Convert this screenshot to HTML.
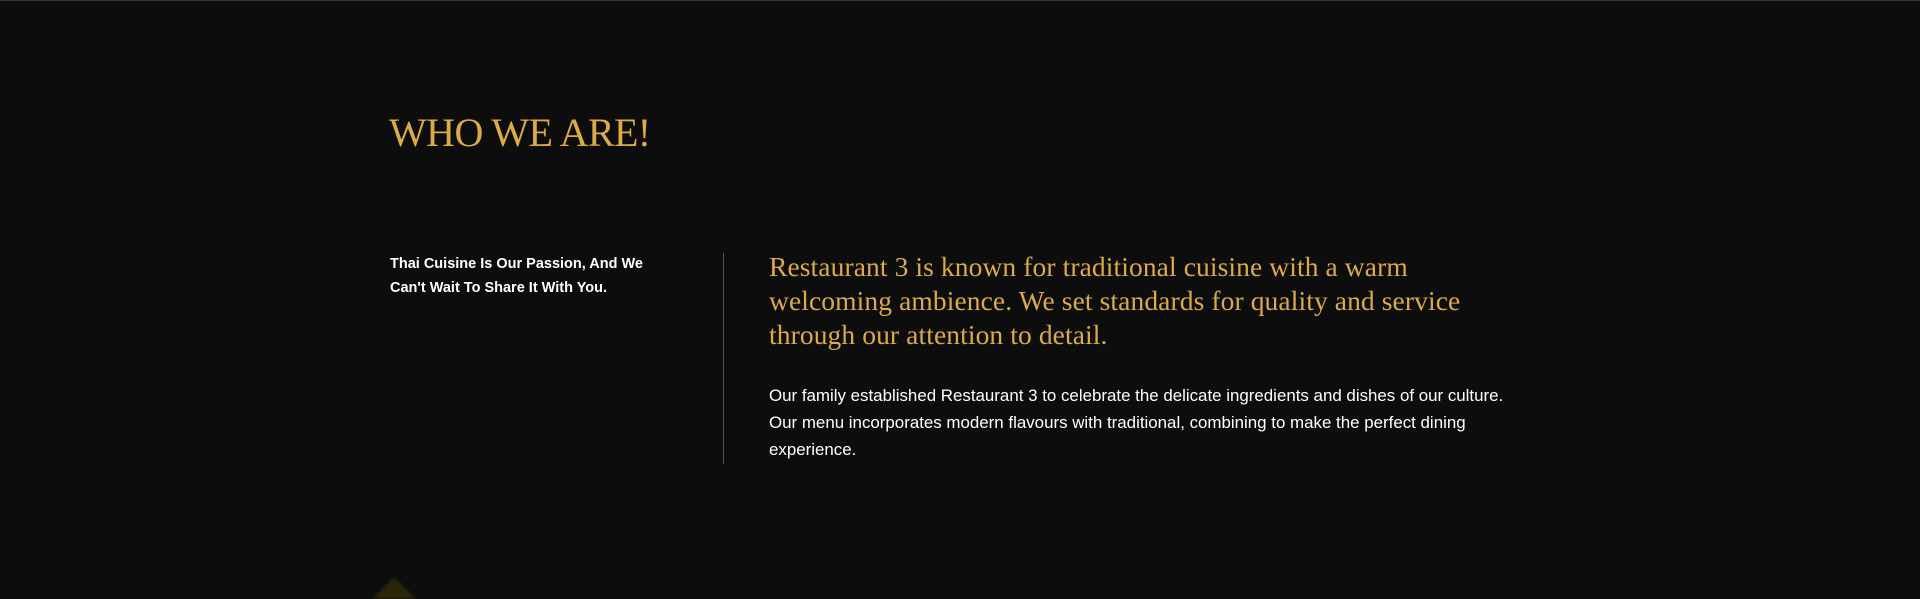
<!DOCTYPE html>
<html><head><meta charset="utf-8"><style>
html,body{margin:0;padding:0;}
body{width:1920px;height:593px;background:#0d0d0d;position:relative;overflow:hidden;border-top:1px solid #3a3a3a;box-sizing:border-box;}
.h{position:absolute;left:389px;top:104px;font-family:"Liberation Serif",serif;font-size:40px;color:#dcab45;letter-spacing:-0.6px;margin:0;font-weight:normal;line-height:56px;}
.sub{position:absolute;left:390px;top:251px;width:290px;font-family:"Liberation Sans",sans-serif;font-weight:bold;font-size:14.5px;line-height:24px;color:#fff;}
.line{position:absolute;left:723px;top:252px;width:1px;height:211px;background:#555;}
.lead{position:absolute;left:769px;top:249px;width:725px;font-family:"Liberation Serif",serif;font-size:27.5px;line-height:34px;letter-spacing:0.1px;color:#dcab45;}
.body{position:absolute;left:769px;top:381px;width:742px;font-family:"Liberation Sans",sans-serif;font-size:16.9px;line-height:27px;color:#fff;}
.tri{position:absolute;left:372px;top:576px;width:0;height:0;border-left:22px solid transparent;border-right:22px solid transparent;border-bottom:22px solid #2c2608;filter:blur(1.5px);}
</style></head><body>
<h2 class="h">WHO WE ARE!</h2>
<div class="sub">Thai Cuisine Is Our Passion, And We Can't Wait To Share It With You.</div>
<div class="line"></div>
<div class="lead">Restaurant 3 is known for traditional cuisine with a warm welcoming ambience. We set standards for quality and service through our attention to detail.</div>
<div class="body">Our family established Restaurant 3 to celebrate the delicate ingredients and dishes of our culture. Our menu incorporates modern flavours with traditional, combining to make the perfect dining experience.</div>
<div class="tri"></div>
</body></html>
